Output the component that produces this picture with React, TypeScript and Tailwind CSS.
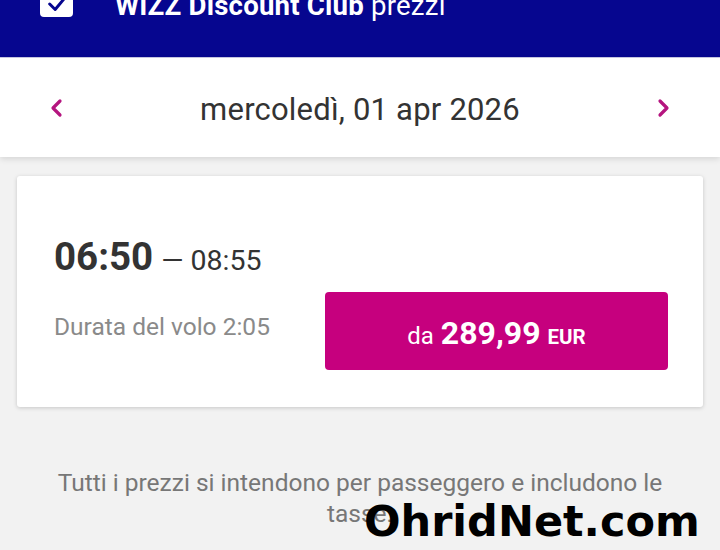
import React from "react";

export default function App() {
  return (
    <div
      className="w-[720px] h-[550px] overflow-hidden bg-[#f2f2f2] relative"
      style={{ fontFamily: "Roboto, 'Noto Sans', sans-serif" }}
    >
      {/* Header */}
      <div className="h-[58px] bg-[#06068f] overflow-hidden border-b border-[#c9c9e6]">
        <div className="flex items-start -mt-[15px] pl-[40px] gap-[42px]">
          <div className="w-[33px] h-[32px] bg-white rounded-[4px] flex items-center justify-center">
            <svg width="22" height="22" viewBox="0 0 24 24" className="mt-[6px]">
              <path d="M4 12 L10 18 L20 6" fill="none" stroke="#06068f" strokeWidth="3.2" strokeLinecap="round" strokeLinejoin="round" />
            </svg>
          </div>
          <div className="text-white text-[27.6px] leading-[32px] mt-[5px] tracking-[0.2px]">
            <span className="font-bold">WIZZ Discount Club</span> prezzi
          </div>
        </div>
      </div>

      {/* Date bar */}
      <div className="h-[99px] bg-white flex items-center justify-between px-[46px] shadow-[0_2px_6px_rgba(0,0,0,0.12)] relative">
        <svg width="20" height="24" viewBox="0 0 20 24">
          <path d="M14 5 L7 12 L14 19" fill="none" stroke="#b5157f" strokeWidth="3.2" strokeLinecap="round" strokeLinejoin="round" />
        </svg>
        <div className="text-[31px] text-[#333333] tracking-[0.2px] mt-[5px]">mercoledì, 01 apr 2026</div>
        <svg width="20" height="24" viewBox="0 0 20 24">
          <path d="M6 5 L13 12 L6 19" fill="none" stroke="#b5157f" strokeWidth="3.2" strokeLinecap="round" strokeLinejoin="round" />
        </svg>
      </div>

      {/* Card */}
      <div className="mx-[17px] mt-[19px] h-[231px] bg-white rounded-[3px] shadow-[0_1px_4px_rgba(0,0,0,0.18)] px-[37px] pt-[59px]">
        <div className="flex items-baseline text-[#333333]">
          <span className="text-[38.5px] font-bold leading-[44px]">06:50</span>
          <span className="text-[28.5px] ml-[8px]">— 08:55</span>
        </div>
        <div className="flex items-center justify-between mt-[9px]">
          <div className="text-[24.5px] text-[#8a8a8a] -mt-[6px]">Durata del volo 2:05</div>
          <div className="w-[343px] h-[78px] bg-[#c6007e] rounded-[4px] flex items-center justify-center text-white -mr-[2px]">
            <div className="flex items-baseline mt-[4px]">
              <span className="text-[24px]">da</span>
              <span className="text-[32px] font-bold ml-[7px]">289,99</span>
              <span className="text-[20.5px] font-bold ml-[7px]">EUR</span>
            </div>
          </div>
        </div>
      </div>

      {/* Footer text */}
      <div className="mt-[60px] px-[40px] text-center text-[24.5px] leading-[31px] text-[#777777]">
        Tutti i prezzi si intendono per passeggero e includono le tasse.
      </div>

      {/* Watermark */}
      <div
        className="absolute left-[364px] top-[495px] text-[43px] font-bold text-black leading-[52px]"
        style={{ fontFamily: "'DejaVu Sans', sans-serif" }}
      >
        OhridNet.com
      </div>
    </div>
  );
}
